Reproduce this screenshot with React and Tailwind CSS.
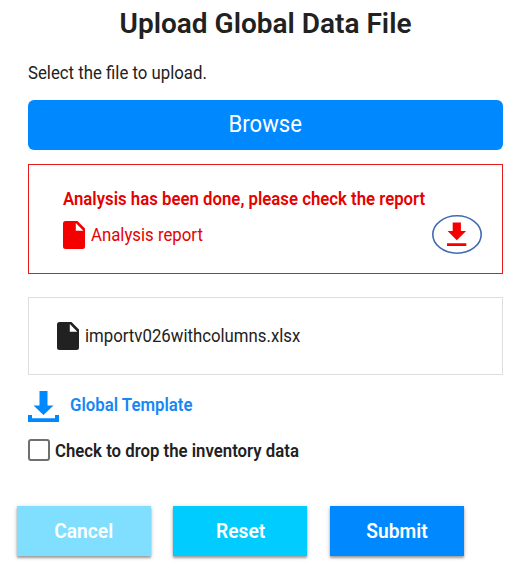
function FileIcon({ className }) {
  return (
    <svg viewBox="0 0 22 28" className={className} fill="currentColor" aria-hidden="true">
      <path d="M2.5 0H14.5L22 7.5V25.5Q22 28 19.5 28H2.5Q0 28 0 25.5V2.5Q0 0 2.5 0ZM12.8 2V9.7H20.3Z" />
    </svg>
  );
}

function ReportDownloadIcon() {
  return (
    <svg viewBox="0 0 50 40" className="h-10 w-[50px]" aria-hidden="true">
      <ellipse cx="25" cy="19.5" rx="24.2" ry="18.7" fill="none" stroke="#416bb3" strokeWidth="1.6" />
      <path d="M20.7 7.5h8.2v8.5h5.2L24.8 25.3 15.6 16h5.1zM15 28.3h19.3v2.7H15z" fill="#f50000" />
    </svg>
  );
}

function TemplateDownloadIcon() {
  return (
    <svg viewBox="0 0 31 31" className="h-[31px] w-[31px]" fill="#0088ff" aria-hidden="true">
      <path d="M11.5 0h8v14.5h6L15.5 24 5.5 14.5h6zM0 24h4v3.3h23V24h4v7H0z" />
    </svg>
  );
}

function Label({ children }) {
  return <span className="inline-block origin-left scale-x-[0.932]">{children}</span>;
}

function ActionButton({ className, children }) {
  return (
    <button
      className={`h-[50px] w-[134px] text-[20px] leading-[50px] font-semibold text-white shadow-[0_2px_2px_rgba(0,0,0,0.3),0_1px_5px_rgba(0,0,0,0.18)] ${className}`}
    >
      <span className="inline-block scale-x-[0.96]">{children}</span>
    </button>
  );
}

export default function App() {
  return (
    <main className="h-[569px] w-[515px] overflow-hidden bg-white font-[Roboto,sans-serif] text-[18px] whitespace-nowrap text-[#212121]">
      <h1 className="pt-1 pl-4 text-center text-[28px] leading-10 font-semibold">
        Upload Global Data File
      </h1>
      <div className="mr-3 ml-7">
        <p className="mt-[17px] leading-6">
          <Label>Select the file to upload.</Label>
        </p>
        <button className="mt-[15px] block h-[50px] w-full rounded-[6px] bg-[#0088ff] text-[23px] text-white">
          <span className="inline-block scale-x-[0.96]">Browse</span>
        </button>
        <section className="mt-3.5 flex h-[110px] flex-col border border-[#e51c1c] pt-[22px] pl-[34px] text-[#e60000]">
          <p className="leading-6 font-semibold">
            <Label>Analysis has been done, please check the report</Label>
          </p>
          <div className="flex h-12 items-center pr-5">
            <FileIcon className="mr-1.5 h-7 w-[22px] text-[#f50000]" />
            <span className="-mt-0.5">
              <Label>Analysis report</Label>
            </span>
            <button className="ml-auto">
              <ReportDownloadIcon />
            </button>
          </div>
        </section>
        <section className="mt-[23px] flex h-[78px] items-center border border-[#dedede] pl-7">
          <FileIcon className="mr-1.5 h-7 w-[22px]" />
          <span className="-mt-0.5">
            <Label>importv026withcolumns.xlsx</Label>
          </span>
        </section>
        <a className="mt-4 flex h-[31px] items-center gap-[11px] font-semibold text-[#1688f5]">
          <TemplateDownloadIcon />
          <span className="-mt-1">
            <Label>Global Template</Label>
          </span>
        </a>
        <label className="mt-[17px] flex h-[22px] items-center gap-[5px] font-semibold">
          <i className="h-[22px] w-[22px] rounded-[3px] border-2 border-[#6f6f6f]" />
          <span>
            <Label>Check to drop the inventory data</Label>
          </span>
        </label>
      </div>
      <footer className="mt-[45px] ml-[17px] flex gap-[22.4px]">
        <ActionButton className="bg-[#80dfff]">Cancel</ActionButton>
        <ActionButton className="bg-[#00ccff]">Reset</ActionButton>
        <ActionButton className="bg-[#0088ff]">Submit</ActionButton>
      </footer>
    </main>
  );
}
